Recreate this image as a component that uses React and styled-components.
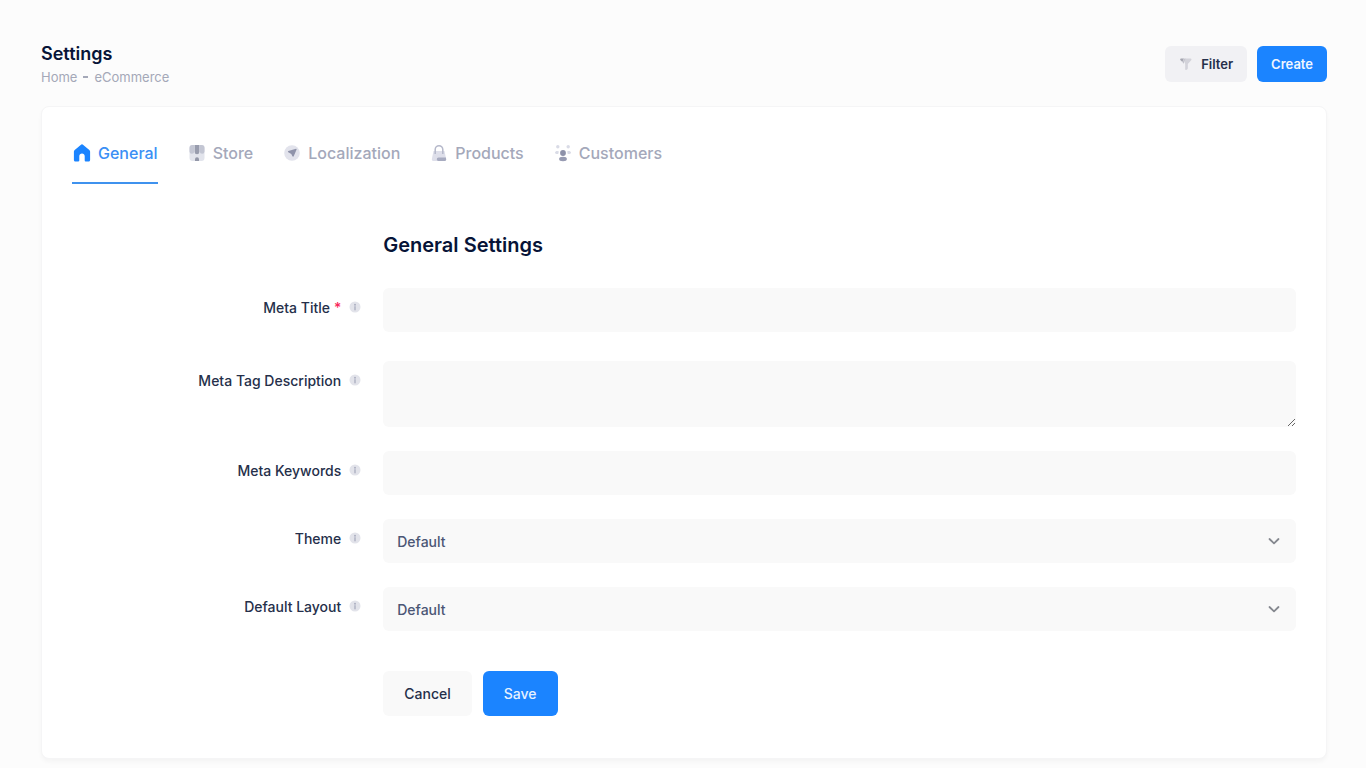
import React, { useState } from 'react'
import styled, { createGlobalStyle } from 'styled-components'

const GlobalStyle = createGlobalStyle`
    *{
        box-sizing: border-box;
    }

    body{
        margin: 0;
        background: #fcfcfc;
        color: #071437;
        font-family: Inter, "Liberation Sans", sans-serif;
    }

    button, input, textarea, select{
        font-family: inherit;
    }
`

const HomeIcon = () => (
    <svg width="20" height="20" viewBox="0 0 20 20" aria-hidden="true">
        <path fill="#1b84ff" d="M8.7 1.9a2 2 0 0 1 2.6 0l6 5c.5.4.8 1 .8 1.7V17c0 .9-.6 1.500-1.500 1.500h-3c-.5 0-.9-.4-.9-.9V13c0-1.600-1.200-2.600-2.700-2.600S7.300 11.400 7.300 13v4.600c0 .5-.4.9-.9.9h-3c-.9 0-1.500-.6-1.500-1.500V8.600c0-.7.3-1.300.8-1.700z" />
    </svg>
)

const StoreIcon = () => (
    <svg width="20" height="20" viewBox="0 0 20 20" aria-hidden="true">
        <path fill="#e2e4ec" d="M5 2h10a2.500 2.500 0 0 1 2.500 2.500V15a3 3 0 0 1-3 3h-9a3 3 0 0 1-3-3V4.500A2.500 2.500 0 0 1 5 2z" />
        <path fill="#c3c6d3" d="M2.500 5a3 3 0 0 1 3-3h1.700v6.500a2.300 2.300 0 0 1-4.700 0zM12.800 2h1.700a3 3 0 0 1 3 3v3.500a2.300 2.300 0 0 1-4.700 0z" />
        <path fill="#989cad" d="M7.700 2h4.600v7a2.300 2.300 0 0 1-4.600 0z" />
        <path fill="#9397a8" d="M8 18v-1.800a2 2 0 0 1 4 0V18z" />
    </svg>
)

const CompassIcon = () => (
    <svg width="20" height="20" viewBox="0 0 20 20" aria-hidden="true">
        <circle cx="10" cy="10" r="7.800" fill="#e2e3ec" />
        <path fill="#8f93aa" d="M14 5.700c.4-.1.8.2.6.7l-2.900 6.900c-.2.600-1 .600-1.300 0L9.300 11 6.300 9.300c-.5-.300-.5-1 .1-1.200z" />
    </svg>
)

const BagIcon = () => (
    <svg width="20" height="20" viewBox="0 0 20 20" aria-hidden="true">
        <path fill="#dedfea" d="M4.500 8h11l1.700 8.300a1.500 1.500 0 0 1-1.500 1.700H4.300a1.500 1.500 0 0 1-1.500-1.700z" />
        <path fill="none" stroke="#b5b8ca" strokeWidth="1.500" d="M6.200 11V6.500a3.800 3.800 0 0 1 7.600 0V11" />
        <path fill="#a7abc0" d="M9.500 14.500h7.400l.3 1.800a1.500 1.500 0 0 1-1.500 1.700H9.500a1.700 1.700 0 0 1 0-3.500z" />
    </svg>
)

const PeopleIcon = () => (
    <svg width="20" height="20" viewBox="0 0 20 20" aria-hidden="true">
        <g fill="#d9dbe6">
            <circle cx="4.800" cy="3.800" r="1.700" />
            <circle cx="15.200" cy="3.800" r="1.700" />
            <path d="M2 9.500c0-1.600 3.200-2.200 4-.8-.5.5-.8 1.300-.7 2.300-1.500.3-3.300-.2-3.300-1.500zM18 9.500c0-1.600-3.200-2.200-4-.8.5.5.8 1.300.7 2.300 1.500.3 3.300-.2 3.300-1.500z" />
        </g>
        <circle cx="10" cy="10" r="2.900" fill="#8d91a9" />
        <ellipse cx="10" cy="16" rx="3.900" ry="2.200" fill="#979bb2" />
    </svg>
)

const FilterIcon = () => (
    <svg width="14" height="14" viewBox="0 0 14 14" aria-hidden="true">
        <path fill="#d3d3da" d="M5.500 1.500h6c.9 0 1.300 1 .7 1.700L8.800 7v4.300c0 .5-.3.900-.7 1.100l-1 .5c-.5.200-.9-.1-.9-.6V7.500z" />
        <path fill="#a5a6b0" d="M2 1.500h3L3.300 5 1.400 3.100C.9 2.500 1.200 1.500 2 1.500z" />
        <path fill="#c3c3cc" d="M5.500 1.500h1L4.800 6.700 3.300 5z" />
    </svg>
)

const InfoIcon = () => (
    <svg width="12" height="12" viewBox="0 0 12 12" aria-hidden="true">
        <circle cx="6" cy="6" r="5.500" fill="#e2e3ea" />
        <circle cx="6" cy="3.700" r="1" fill="#adb0c1" />
        <path stroke="#adb0c1" strokeWidth="1.400" strokeLinecap="round" d="M6 5.800v3" />
    </svg>
)

const ChevronIcon = () => (
    <svg width="12" height="12" viewBox="0 0 12 12" aria-hidden="true">
        <path fill="none" stroke="#85888f" strokeWidth="1.800" strokeLinecap="round" strokeLinejoin="round" d="M1.500 4 6 8.300 10.500 4" />
    </svg>
)

const tabs = [
    { name: 'General', icon: <HomeIcon /> },
    { name: 'Store', icon: <StoreIcon /> },
    { name: 'Localization', icon: <CompassIcon /> },
    { name: 'Products', icon: <BagIcon /> },
    { name: 'Customers', icon: <PeopleIcon /> },
]

const FieldLabel = ({ id, text, required }) => (
    <LabelCell>
        <label htmlFor={id}>{text}</label>
        {required && <Required>*</Required>}
        <InfoIcon />
    </LabelCell>
)

const SelectField = ({ id, text }) => (
    <FieldRow>
        <FieldLabel id={id} text={text} />
        <SelectWrap>
            <Select id={id} defaultValue="Default">
                <option>Default</option>
            </Select>
            <ChevronIcon />
        </SelectWrap>
    </FieldRow>
)

const App = () => {

    const [activeTab, setActiveTab] = useState('General')

    function handleSubmit(e) {
        e.preventDefault();
    }

    return (
        <Page>
            <GlobalStyle />
            <Header>
                <div>
                    <Title>Settings</Title>
                    <Breadcrumb aria-label="Breadcrumb">
                        <a href="#home">Home</a>
                        <Dash />
                        <a href="#ecommerce">eCommerce</a>
                    </Breadcrumb>
                </div>
                <Actions>
                    <SmallButton type="button"><FilterIcon />Filter</SmallButton>
                    <SmallButton type="button" $primary>Create</SmallButton>
                </Actions>
            </Header>

            <Card>
                <Tabs>
                    {tabs.map((tab) => (
                        <Tab href={`#${tab.name}`} key={tab.name} $active={activeTab === tab.name} onClick={() => setActiveTab(tab.name)}>
                            {tab.icon}
                            {tab.name}
                        </Tab>
                    ))}
                </Tabs>

                <form onSubmit={handleSubmit}>
                    <FormGrid>
                        <SectionTitle>General Settings</SectionTitle>
                    </FormGrid>
                    <FieldRow $spaced>
                        <FieldLabel id="title" text="Meta Title" required />
                        <Input id="title" type="text" />
                    </FieldRow>
                    <FieldRow>
                        <FieldLabel id="description" text="Meta Tag Description" />
                        <TextArea id="description" />
                    </FieldRow>
                    <FieldRow>
                        <FieldLabel id="keywords" text="Meta Keywords" />
                        <Input id="keywords" type="text" />
                    </FieldRow>
                    <SelectField id="theme" text="Theme" />
                    <SelectField id="layout" text="Default Layout" />
                    <FormGrid>
                        <FormActions>
                            <Button type="reset">Cancel</Button>
                            <Button type="submit" $primary>Save</Button>
                        </FormActions>
                    </FormGrid>
                </form>
            </Card>
        </Page>
    )
}

const Page = styled.main`
    padding: 42px 39px 8px 41px;
`

const Header = styled.header`
    display: flex;
    justify-content: space-between;
    align-items: flex-start;
    padding-bottom: 19px;
`

const Title = styled.h1`
    margin: 0;
    font-size: 18px;
    line-height: 24px;
    font-weight: 600;
`

const Breadcrumb = styled.nav`
    display: flex;
    align-items: center;
    gap: 6px;
    padding-top: 1px;
    font-size: 13px;
    line-height: 20px;

    a{
        color: #a4a8b8;
        text-decoration: none;
    }
`

const Dash = styled.span`
    width: 5px;
    height: 2px;
    background: #a4a8b8;
`

const Actions = styled.div`
    display: flex;
    gap: 10px;
    padding-top: 4px;
`

const SmallButton = styled.button`
    display: flex;
    align-items: center;
    gap: 8px;
    height: 36px;
    padding: 0 14px;
    border: none;
    border-radius: 6px;
    background: ${(props) => (props.$primary ? '#1b84ff' : '#f1f1f4')};
    color: ${(props) => (props.$primary ? '#f0f6ff' : '#252f4a')};
    font-size: 13px;
    font-weight: 600;
`

const Card = styled.section`
    padding: 20px 30px 42px;
    border: 1px solid #f5f5f6;
    border-radius: 8px;
    background: #ffffff;
    box-shadow: 0 3px 4px rgba(0, 0, 0, 0.03);
`

const Tabs = styled.nav`
    display: flex;
    gap: 29px;
    margin-bottom: 48px;
`

const Tab = styled.a`
    display: flex;
    align-items: center;
    gap: 6px;
    height: 57px;
    padding: 2px 0 5px;
    border-bottom: 2px solid ${(props) => (props.$active ? '#3f92ee' : 'transparent')};
    color: ${(props) => (props.$active ? '#3b8ff5' : '#a4a8ba')};
    font-size: 16px;
    font-weight: 500;
    text-decoration: none;
`

const FormGrid = styled.div`
    display: grid;
    grid-template-columns: 1fr 3fr;
    column-gap: 7px;
`

const SectionTitle = styled.h2`
    grid-column: 2;
    margin: 0 0 30px;
    font-size: 20px;
    line-height: 26px;
    font-weight: 600;
`

const FieldRow = styled(FormGrid)`
    margin-bottom: ${(props) => (props.$spaced ? '29px' : '24px')};
`

const LabelCell = styled.div`
    display: flex;
    justify-content: flex-end;
    padding: 10px 15px 0 0;
    color: #252f4a;
    font-size: 14px;
    line-height: 20px;
    font-weight: 500;

    svg{
        margin: 3px 0 0 8px;
    }
`

const Required = styled.span`
    padding-left: 4px;
    color: #f8285a;
`

const Input = styled.input`
    width: 100%;
    height: 44px;
    padding: 0 14px;
    border: none;
    border-radius: 6px;
    background: #f9f9f9;
    color: #4b5675;
    font-size: 14px;
`

const TextArea = styled.textarea`
    display: block;
    width: 100%;
    height: 66px;
    padding: 12px 14px;
    border: none;
    border-radius: 6px;
    background: #f9f9f9;
    color: #4b5675;
    font-size: 14px;
    resize: vertical;
`

const SelectWrap = styled.div`
    display: grid;
    align-items: center;

    > *{
        grid-area: 1 / 1;
    }

    svg{
        justify-self: end;
        margin-right: 16px;
        pointer-events: none;
    }
`

const Select = styled.select`
    appearance: none;
    width: 100%;
    height: 44px;
    padding: 0 14px;
    border: none;
    border-radius: 6px;
    background: #f9f9f9;
    color: #4b5675;
    font-size: 14px;
    font-weight: 500;
`

const FormActions = styled.div`
    grid-column: 2;
    display: flex;
    gap: 11px;
    padding-top: 16px;
`

const Button = styled.button`
    height: 45px;
    padding: 0 21px;
    border: none;
    border-radius: 6px;
    background: ${(props) => (props.$primary ? '#1b84ff' : '#f9f9f9')};
    color: ${(props) => (props.$primary ? '#e6f1ff' : '#252f4a')};
    font-size: 14px;
    font-weight: 500;
`

export default App
